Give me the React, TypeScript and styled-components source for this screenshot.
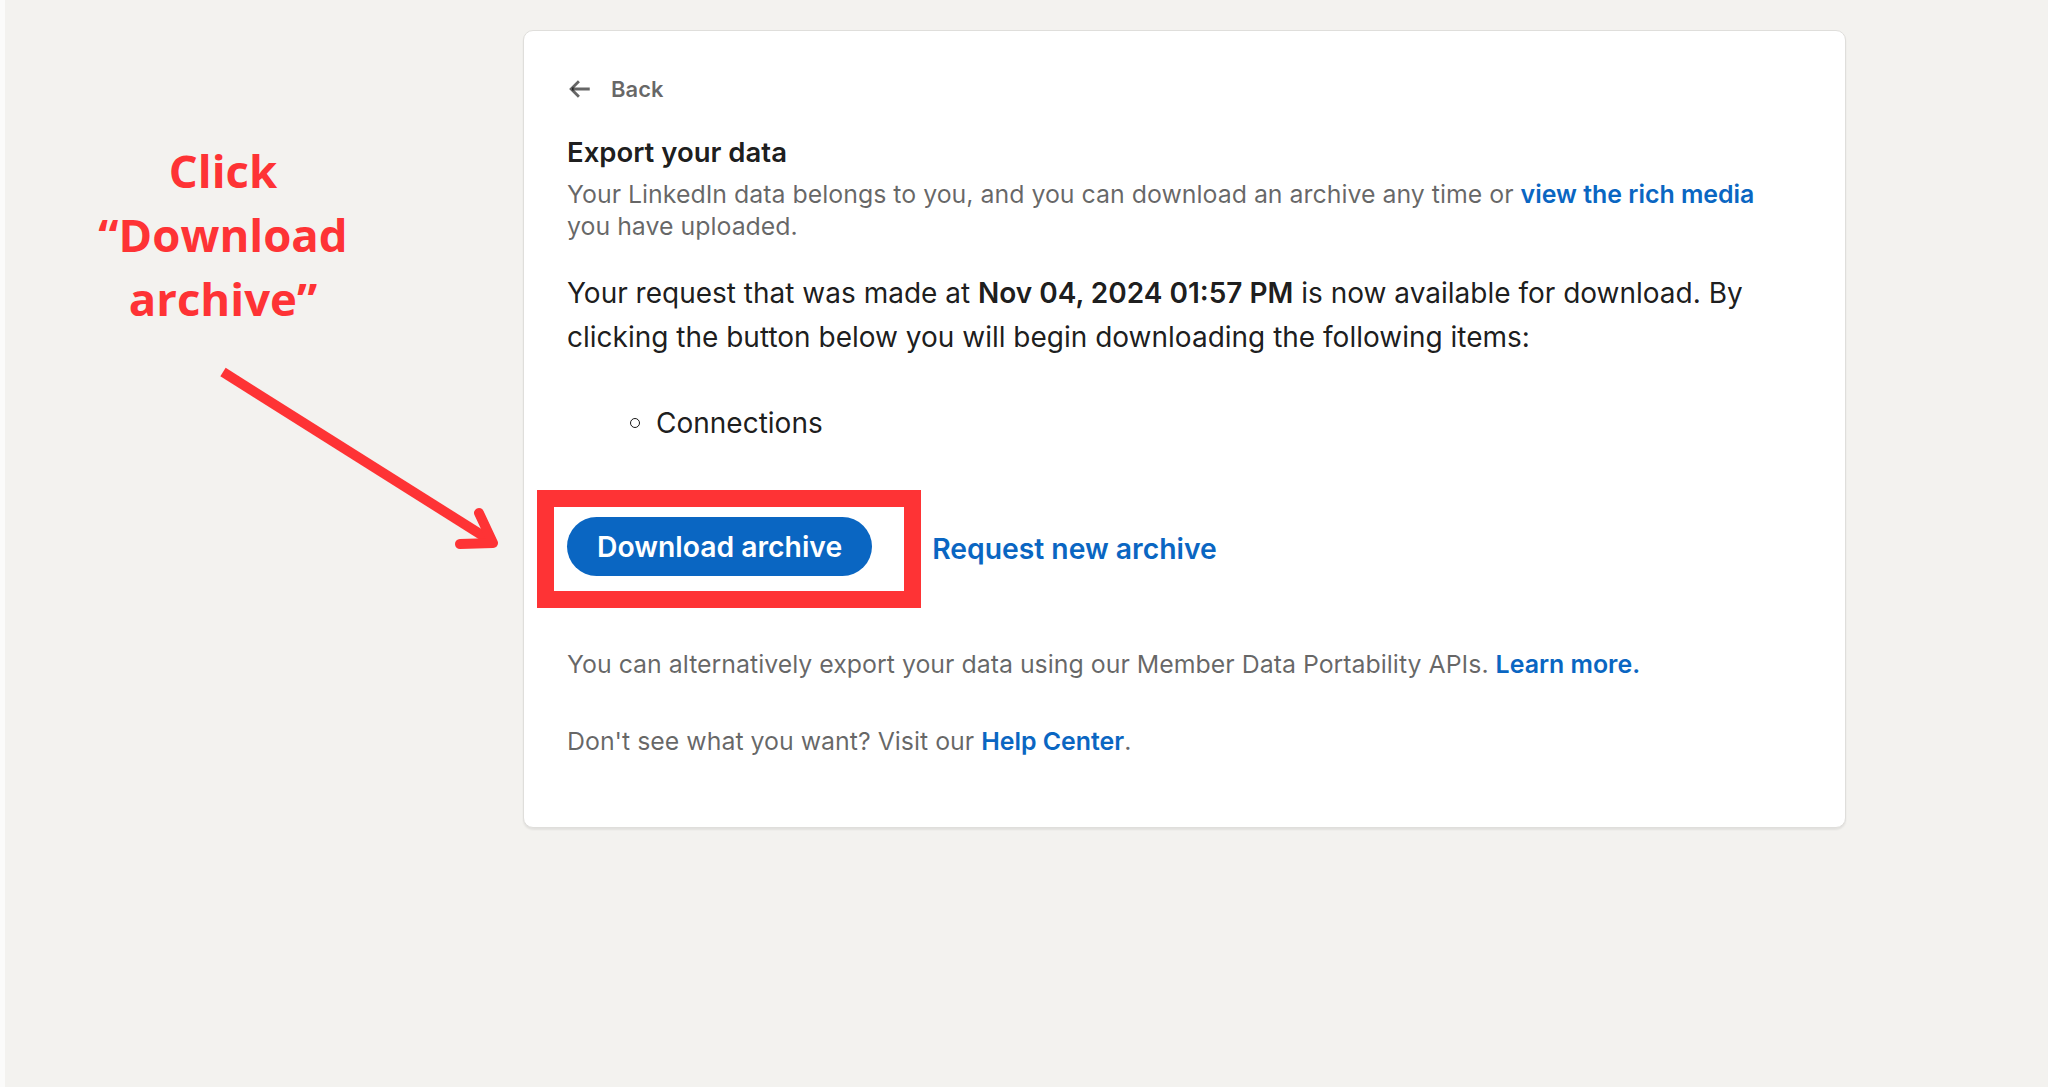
import React, { FC } from "react";
import styled, { createGlobalStyle } from "styled-components";

const GlobalStyle = createGlobalStyle`
  *, *::before, *::after {
    box-sizing: border-box;
  }
  html, body {
    margin: 0;
    padding: 0;
  }
  body {
    background-color: #f3f2ef;
    border-left: 5px solid #fbfbfa;
    min-height: 100vh;
    font-family: Inter, "Liberation Sans", sans-serif;
    -webkit-font-smoothing: antialiased;
  }
`;

const Colors = {
  text: "rgba(0, 0, 0, 0.9)",
  muted: "rgba(0, 0, 0, 0.6)",
  blue: "#0a66c2",
  red: "#fe3335",
  border: "#dfdedb",
};

const Page = styled.div`
  display: flex;
  align-items: flex-start;
  padding-top: 30px;
`;

const AnnotationColumn = styled.div`
  width: 518px;
  flex-shrink: 0;
  display: flex;
  flex-direction: column;
`;

const Note = styled.div`
  width: 436px;
  margin-top: 108px;
  font-family: "Open Sans", "Liberation Sans", sans-serif;
  font-weight: 700;
  font-size: 45.5px;
  line-height: 64px;
  color: ${Colors.red};
  text-align: center;
`;

const Pointer = styled.svg`
  margin-top: 30px;
  margin-left: 210px;
  display: block;
`;

const Card = styled.div`
  width: 1323px;
  flex-shrink: 0;
  background-color: #fff;
  border: 1px solid ${Colors.border};
  border-radius: 10px;
  box-shadow: 0 2px 2px rgba(0, 0, 0, 0.07);
  overflow: hidden;
`;

const CardHeader = styled.div`
  padding: 44px 43px 30px;
`;

const BackLink = styled.a`
  display: inline-flex;
  align-items: center;
  gap: 18px;
  color: ${Colors.muted};
  font-size: 22px;
  font-weight: 600;
  line-height: 28px;
  text-decoration: none;
  cursor: pointer;
`;

const CardBody = styled.div`
  padding: 0 43px 70px;
`;

const Heading = styled.h1`
  margin: 0;
  font-size: 27.5px;
  font-weight: 600;
  line-height: 32px;
  color: ${Colors.text};
`;

const Subtitle = styled.p<{ $gap: number }>`
  margin: ${(p) => p.$gap}px 0 0;
  font-size: 24.9px;
  line-height: 32px;
  color: ${Colors.muted};
`;

const Link = styled.a`
  color: ${Colors.blue};
  font-weight: 600;
  text-decoration: none;
  cursor: pointer;
`;

const Lead = styled.p`
  margin: 29px 0 0;
  font-size: 28px;
  line-height: 44px;
  color: ${Colors.text};

  strong {
    font-weight: 600;
  }
`;

const ItemList = styled.ul`
  margin: 42px 0 0;
  padding-left: 63px;
  list-style: none;
`;

const Item = styled.li`
  display: flex;
  align-items: center;
  gap: 16px;
  font-size: 28px;
  line-height: 44px;
  color: ${Colors.text};

  &::before {
    content: "";
    width: 10px;
    height: 10px;
    border: 1.5px solid ${Colors.text};
    border-radius: 50%;
  }
`;

const ActionRow = styled.div`
  display: flex;
  align-items: center;
  gap: 11px;
  margin: 45px 0 0 -30px;
`;

const RedFrame = styled.div`
  border: 17px solid ${Colors.red};
  padding: 10px 32px 15px 13px;
`;

const PrimaryButton = styled.button`
  display: block;
  height: 59px;
  padding: 0 30px;
  border: none;
  border-radius: 30px;
  background-color: ${Colors.blue};
  color: #fff;
  font-family: inherit;
  font-size: 28.3px;
  font-weight: 600;
  cursor: pointer;
`;

const TextButton = styled.button`
  padding: 0;
  border: none;
  background: none;
  color: ${Colors.blue};
  font-family: inherit;
  font-size: 28.3px;
  font-weight: 600;
  cursor: pointer;
`;

const ArrowLeft: FC = () => (
  <svg width="26" height="26" viewBox="0 0 24 24" fill="none">
    <path d="M21 12H4.5" stroke="currentColor" strokeWidth="2.6" />
    <path
      d="M11 4.8 3.8 12l7.2 7.2"
      stroke="currentColor"
      strokeWidth="2.6"
      strokeLinejoin="miter"
    />
  </svg>
);

export const App: FC = () => {
  return (
    <>
      <GlobalStyle />
      <Page>
        <AnnotationColumn>
          <Note>
            Click
            <br />
            “Download
            <br />
            archive”
          </Note>
          <Pointer width="290" height="195" viewBox="0 0 290 195">
            <line x1="8" y1="12" x2="273" y2="179" stroke={Colors.red} strokeWidth="10" />
            <polyline
              points="264,153 278,183 245,184"
              fill="none"
              stroke={Colors.red}
              strokeWidth="10"
              strokeLinecap="round"
              strokeLinejoin="round"
            />
          </Pointer>
        </AnnotationColumn>

        <Card>
          <CardHeader>
            <BackLink>
              <ArrowLeft />
              Back
            </BackLink>
          </CardHeader>
          <CardBody>
            <Heading>Export your data</Heading>
            <Subtitle $gap={10}>
              Your LinkedIn data belongs to you, and you can download an archive any time or{" "}
              <Link>view the rich media</Link>
              <br />
              you have uploaded.
            </Subtitle>
            <Lead>
              Your request that was made at <strong>Nov 04, 2024 01:57 PM</strong> is now available
              for download. By clicking the button below you will begin downloading the following
              items:
            </Lead>
            <ItemList>
              <Item>Connections</Item>
            </ItemList>
            <ActionRow>
              <RedFrame>
                <PrimaryButton>Download archive</PrimaryButton>
              </RedFrame>
              <TextButton>Request new archive</TextButton>
            </ActionRow>
            <Subtitle $gap={40}>
              You can alternatively export your data using our Member Data Portability APIs.{" "}
              <Link>Learn more.</Link>
            </Subtitle>
            <Subtitle $gap={45}>
              Don't see what you want? Visit our <Link>Help Center</Link>.
            </Subtitle>
          </CardBody>
        </Card>
      </Page>
    </>
  );
};

export default App;
